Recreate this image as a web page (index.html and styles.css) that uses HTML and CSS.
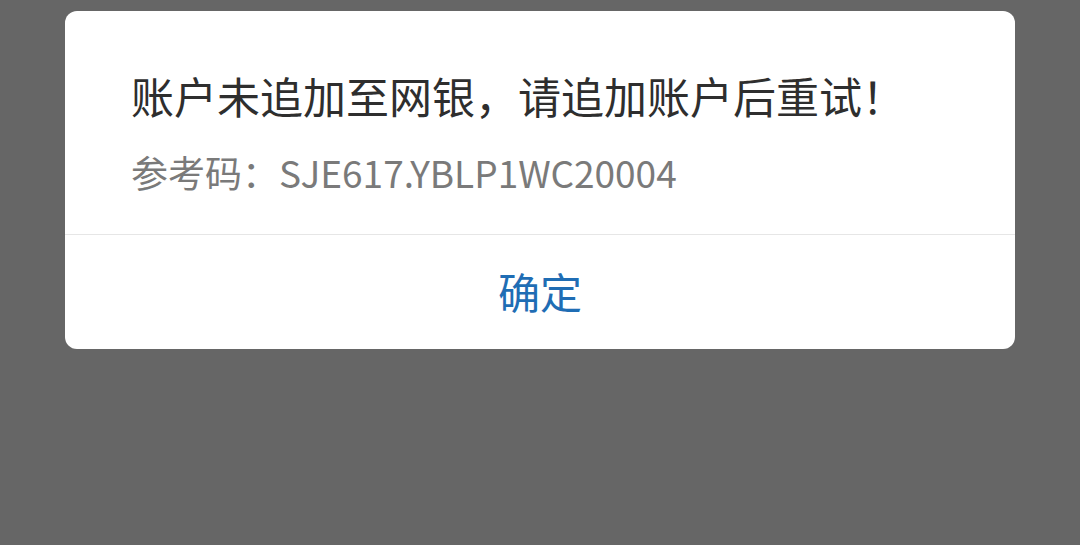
FILE: index.html
```html
<!DOCTYPE html>
<html lang="zh-CN">
<head>
<meta charset="utf-8">
<link rel="stylesheet" href="styles.css">
</head>
<body>
<div class="dialog">
  <div class="content">
    <div class="title">账户未追加至网银，请追加账户后重试！</div>
    <div class="code">参考码：SJE617.YBLP1WC20004</div>
  </div>
  <div class="divider"></div>
  <div class="actions">
    <div class="btn">确定</div>
  </div>
</div>
</body>
</html>
```

FILE: styles.css
```css
html, body {
  margin: 0;
  padding: 0;
  background: #666666;
  width: 1080px;
  height: 545px;
  overflow: hidden;
}
body {
  font-family: "Noto Sans CJK SC", "Noto Sans", sans-serif;
}
.dialog {
  margin: 11px 65px 0;
  width: 950px;
  height: 338px;
  background: #ffffff;
  border-radius: 12px;
  display: flex;
  flex-direction: column;
}
.content {
  padding: 54px 66px 37px;
  display: flex;
  flex-direction: column;
  gap: 22px;
}
.title {
  font-size: 43px;
  line-height: 60px;
  color: #2e2e2e;
}
.code {
  font-size: 37px;
  line-height: 50px;
  color: #7a7a7a;
}
.divider {
  height: 1px;
  background: #e6e6e6;
}
.actions {
  flex: 1;
  display: flex;
  align-items: center;
  justify-content: center;
}
.btn {
  font-size: 42px;
  color: #1f6db4;
  line-height: 60px;
  margin-top: -2px;
}
```
